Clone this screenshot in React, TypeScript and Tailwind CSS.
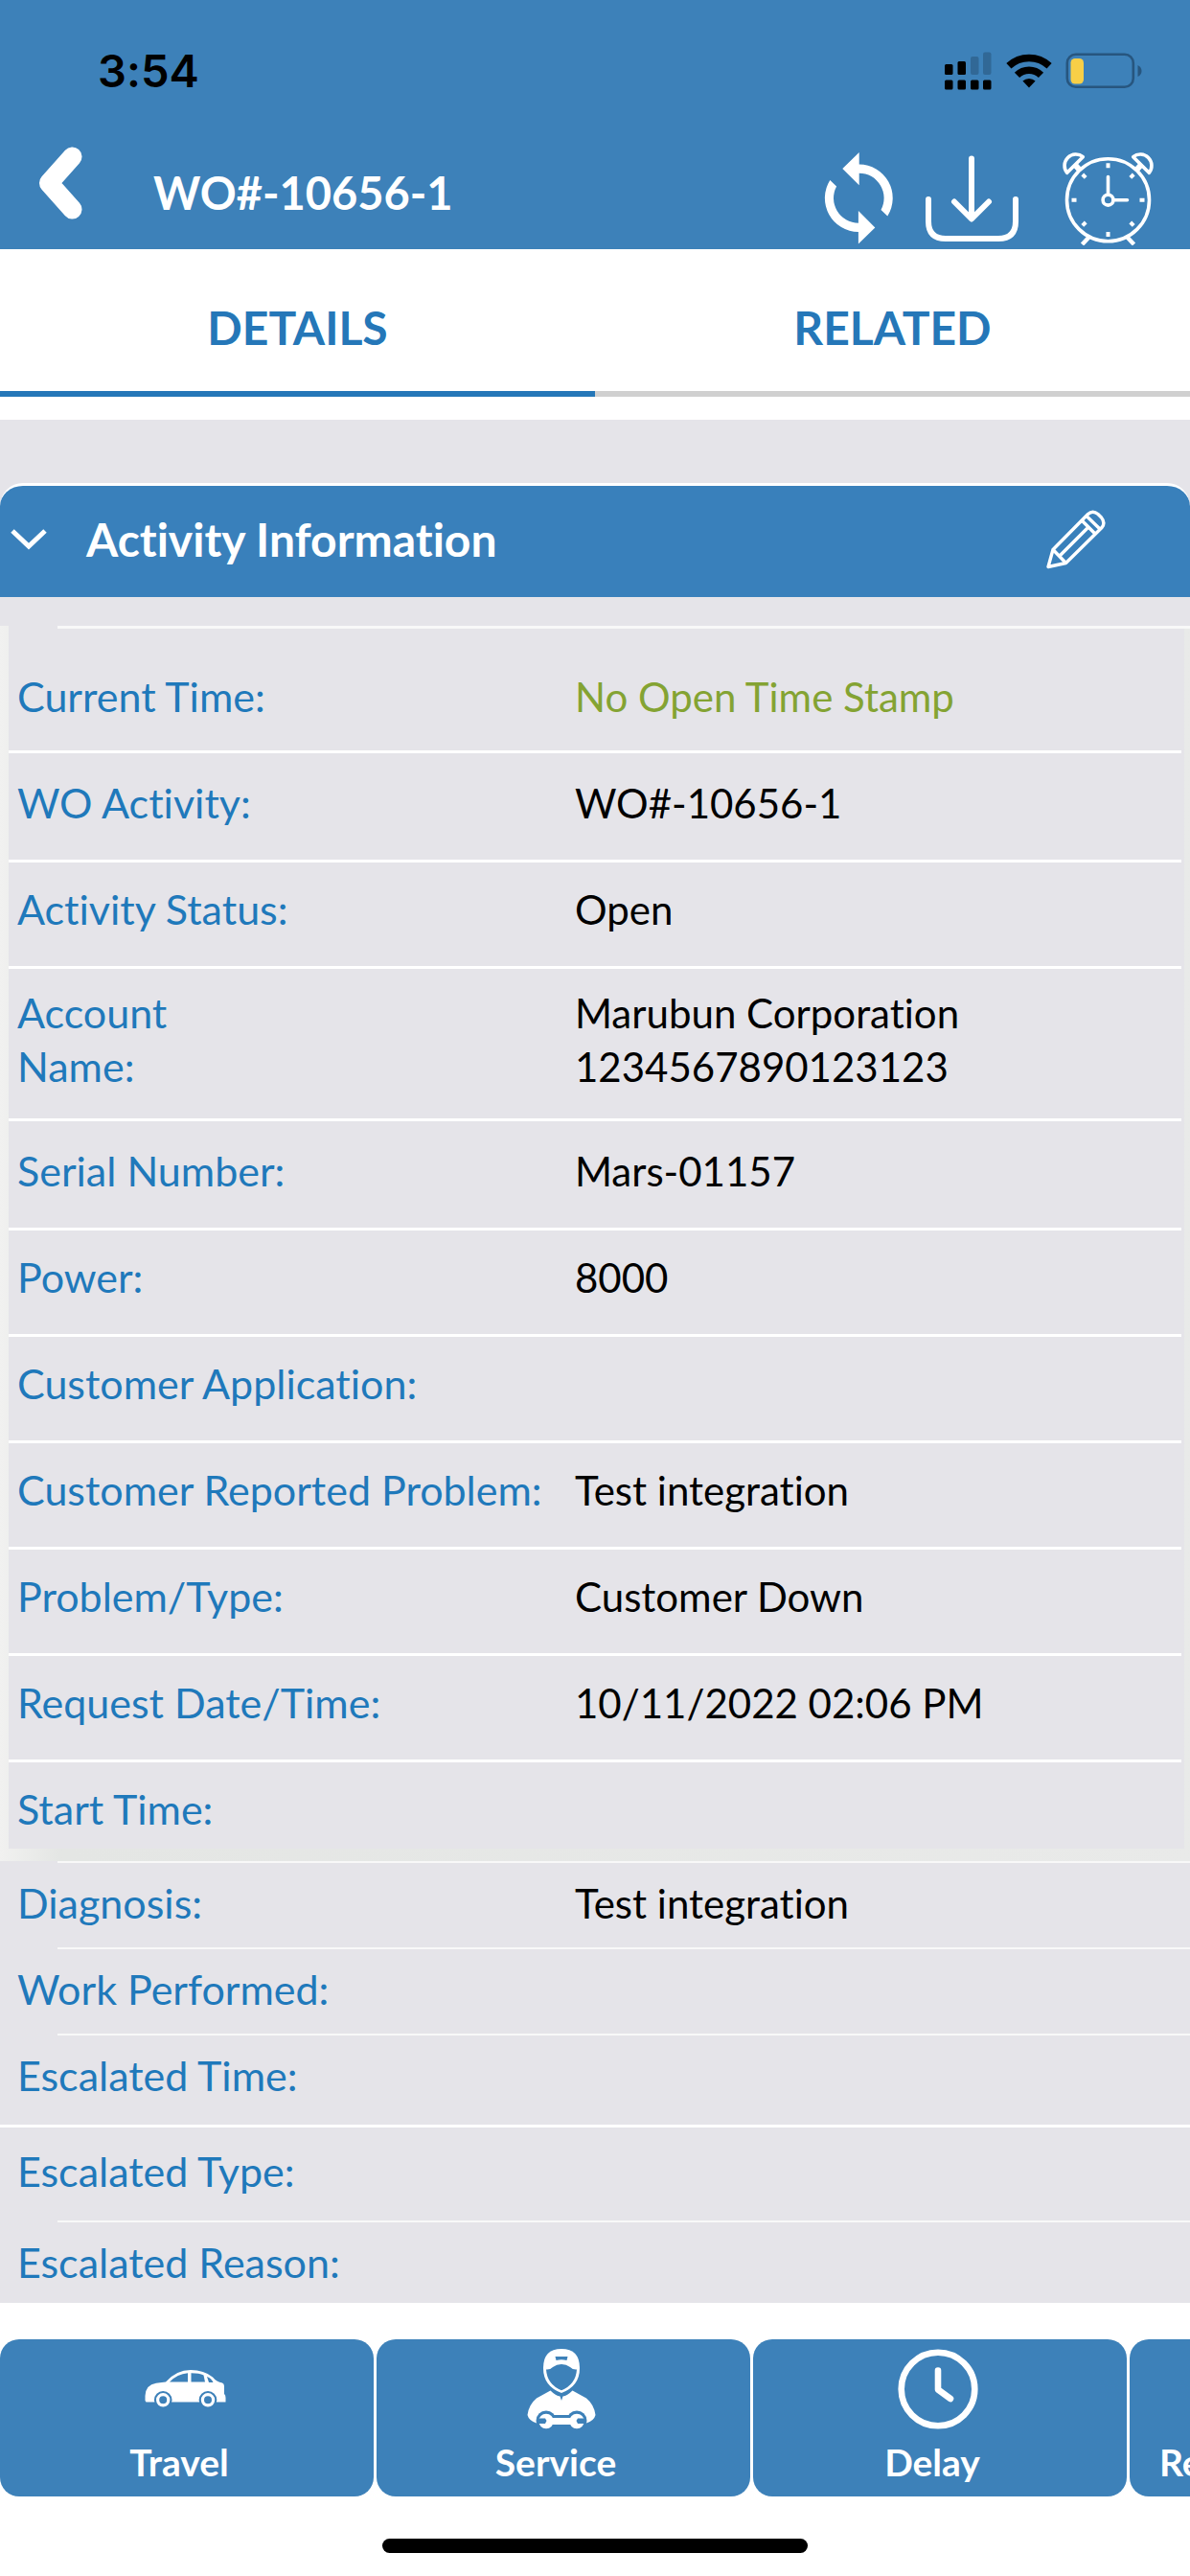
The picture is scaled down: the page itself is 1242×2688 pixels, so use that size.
import type { ReactNode } from 'react';
import { Headset } from 'lucide-react';

interface Field {
  label: string;
  value?: string;
  className: string;
  valueClassName?: string;
}

// Full-width white rule drawn under a row
const RULE = 'after:col-span-2 after:h-[3px] after:bg-white';

const activityFields: Field[] = [
  {
    label: 'Current Time:',
    value: 'No Open Time Stamp',
    className: 'pt-[43px] gap-y-7',
    valueClassName: 'text-[#84a333]',
  },
  {
    label: 'WO Activity:',
    value: 'WO#-10656-1',
    className: 'pt-6 gap-y-[31px]',
  },
  {
    label: 'Activity Status:',
    value: 'Open',
    className: 'pt-[21px] gap-y-[31px]',
  },
  {
    label: 'Account\nName:',
    value: 'Marubun Corporation\n1234567890123123',
    className: 'pt-[18px] gap-y-[26px]',
  },
  {
    label: 'Serial Number:',
    value: 'Mars-01157',
    className: 'pt-6 gap-y-[31px]',
  },
  { label: 'Power:', value: '8000', className: 'pt-[21px] gap-y-[31px]' },
  { label: 'Customer Application:', className: 'pt-[21px] gap-y-[31px]' },
  {
    label: 'Customer Reported Problem:',
    value: 'Test integration',
    className: 'pt-[21px] gap-y-[31px]',
  },
  {
    label: 'Problem/Type:',
    value: 'Customer Down',
    className: 'pt-[21px] gap-y-[31px]',
  },
  {
    label: 'Request Date/Time:',
    value: '10/11/2022 02:06 PM',
    className: 'pt-[21px] gap-y-[31px]',
  },
];

function FieldRow({
  field,
  rule = '',
  className = '',
}: {
  field: Field;
  rule?: string;
  className?: string;
}) {
  return (
    <div
      className={`grid grid-cols-[591px_1fr] leading-14 ${field.className} ${rule} ${className}`}
    >
      <dt className="pl-[9px] text-[43px] whitespace-pre-line text-[#1f79bb]">
        {field.label}
      </dt>
      <dd
        className={`text-[42px] whitespace-pre-line ${field.valueClassName ?? 'text-black'}`}
      >
        {field.value}
      </dd>
    </div>
  );
}

function SignalIcon() {
  return (
    <svg width="51" height="40" viewBox="0 0 51 40">
      <rect x="1" y="13" width="8.5" height="11" rx="1.5" />
      <rect x="14.5" y="10" width="8.5" height="14" rx="1.5" />
      <rect x="28" y="5" width="8.5" height="19" rx="2" fill="#316896" />
      <rect x="41" y="0.5" width="8.5" height="23.5" rx="2" fill="#316896" />
      <rect x="1" y="29.5" width="8.5" height="10" rx="1.5" />
      <rect x="14.5" y="29.5" width="8.5" height="10" rx="1.5" />
      <rect x="28" y="29.5" width="8.5" height="10" rx="1.5" />
      <rect x="41" y="29.5" width="8.5" height="10" rx="1.5" />
    </svg>
  );
}

function WifiIcon() {
  return (
    <svg width="48" height="36" viewBox="0 0 48 36">
      <g fill="none" stroke="#000" strokeWidth="7.5">
        <path d="M2.9 12.8 A31 31 0 0 1 45.1 12.8" />
        <path d="M11.5 22.4 A18 18 0 0 1 36.5 22.4" />
      </g>
      <path d="M17.4 28.6 A9.5 9.5 0 0 1 30.6 28.6 L24 35.5 Z" />
    </svg>
  );
}

function BatteryIcon() {
  return (
    <svg width="80" height="38" viewBox="0 0 80 38">
      <rect
        x="1.8"
        y="1.8"
        width="69"
        height="34"
        rx="9"
        fill="none"
        stroke="#27567f"
        strokeWidth="2.6"
      />
      <rect x="5.5" y="6" width="13.5" height="26.5" rx="4.5" fill="#f8cf47" />
      <path d="M75.5 13 Q79.5 15 79.5 19 T75.5 25 Z" fill="#27567f" />
    </svg>
  );
}

function RefreshIcon() {
  const arrow =
    'M37.7 1 L20.3 18 L37.7 35.3 V22.7 A26 26 0 0 1 60.5 61 L67.3 67.5 A35.3 35.3 0 0 0 37.7 13.4 Z';
  return (
    <svg width="75" height="98" viewBox="0 0 75 98" fill="#fff">
      <path d={arrow} />
      <path d={arrow} transform="rotate(180 37.3 48.7)" />
    </svg>
  );
}

function DownloadIcon() {
  return (
    <svg
      width="98"
      height="98"
      viewBox="0 -4 98 98"
      fill="none"
      stroke="#fff"
      strokeWidth="6"
      strokeLinecap="round"
      strokeLinejoin="round"
    >
      <path d="M3 46 V69 Q3 87 21 87 H76 Q94 87 94 69 V46" />
      <path d="M48 3.5 V66 M30 48.5 L48 66.5 L66 48.5" />
    </svg>
  );
}

function AlarmIcon() {
  return (
    <svg
      width="97"
      height="98"
      viewBox="0 0 97 98"
      fill="none"
      stroke="#fff"
      strokeWidth="3.6"
    >
      <circle cx="48.5" cy="50.7" r="43" />
      <circle cx="48.5" cy="50.7" r="5.4" />
      <path d="M48.5 45.3 V26.5 M54 50.7 H68.5" strokeLinecap="round" />
      <path d="M22.3 5.7 A11.8 11.8 0 0 0 5.7 22.3 Z" strokeLinejoin="round" />
      <path d="M74.7 5.7 A11.8 11.8 0 0 1 91.3 22.3 Z" strokeLinejoin="round" />
      <path d="M14 14 L19 19.5 M83 14 L78 19.5" strokeWidth="6" />
      <path d="M28.5 89.5 L21.5 97 M68.5 89.5 L75.5 97" strokeWidth="4.4" />
      <path
        d="M48.5 12.3 V17.3 M48.5 84 V89 M10.5 50.7 H15.5 M81.5 50.7 H86.5 M21.8 24 L25.2 27.4 M71.8 27.4 L75.2 24 M21.8 77.4 L25.2 74 M71.8 74 L75.2 77.4"
        strokeWidth="4"
      />
    </svg>
  );
}

function PencilIcon() {
  return (
    <svg
      width="62"
      height="62"
      viewBox="0 0 62 62"
      fill="none"
      stroke="#fff"
      strokeWidth="3.4"
      strokeLinejoin="round"
    >
      <path d="M2 59.5 L7 41.5 L43.5 4.5 Q48.5 0 54 4.5 L57.5 8 Q62 13.5 58 18.5 L20.5 55.5 Z" />
      <path d="M7 41.5 L20.5 55.5 M14 48 L43.5 18.5 M37 11 L51.5 25.5 M42 6.5 L56.5 20.5" />
    </svg>
  );
}

function CarIcon() {
  return (
    <svg width="85" height="84" viewBox="0 -22 85 84" fill="#fff">
      <path d="M0.5 32 V27 Q1 15.5 12 13.8 L22 12.5 Q33 0 48 0 Q62 0 71 7.5 Q75 12.5 81 13.5 Q83 14 83 17 V25 Q84.5 26 84.5 29 V33.5 H1.5 Z" />
      <g fill="#3d81b9">
        <path d="M26 12.5 Q34 4 45 3.2 V12.5 Z" />
        <path d="M48.5 3.2 Q57 3.2 61.5 5.5 L63 12.5 H48.5 Z" />
        <path d="M65 7 Q69.5 8.5 71.5 13 H67 Z" />
        <circle cx="19.2" cy="31.3" r="9.3" />
        <circle cx="66" cy="31.3" r="9.3" />
      </g>
      <g fill="none" stroke="#fff" strokeWidth="3.2">
        <circle cx="19.2" cy="31.3" r="5.6" />
        <circle cx="66" cy="31.3" r="5.6" />
      </g>
    </svg>
  );
}

function MechanicIcon() {
  return (
    <svg width="72" height="84" viewBox="0 0 72 84" fill="#fff">
      <path d="M17 20 Q17 0 36 0 Q55 0 55 20 Q55 39 36 46 Q17 39 17 20 Z" />
      <path
        d="M20 21.5 Q24 22 27 19 Q31 16 36 16 Q41 16 45 19 Q48 22 52 21.5 Q51 37 36 43.3 Q21 37 20 21.5 Z"
        fill="#3d81b9"
      />
      <path d="M29.5 8 H42.5 L41.5 12 Q36 10.5 30.5 12 Z" fill="#3d81b9" />
      <path d="M24.5 43.5 Q30 49 34.5 49.5 L36 54 L37.5 49.5 Q42 49 47.5 43.5 L62 51.5 Q70 58 71.5 69 Q70 75 62 77.5 H10 Q2 75 0.5 69 Q2 58 10 51.5 Z" />
      <g fill="#3d81b9">
        <circle cx="20" cy="75" r="10.5" />
        <circle cx="52" cy="75" r="10.5" />
        <rect x="20" y="69" width="32" height="13" />
      </g>
      <circle cx="20" cy="75.5" r="7.8" />
      <circle cx="52" cy="75.5" r="7.8" />
      <rect x="20" y="72" width="32" height="7" />
      <path d="M11 72.5 H19 L20.5 75 L19 78 H11 Z" fill="#3d81b9" />
      <path d="M61 72.5 H53 L51.5 75 L53 78 H61 Z" fill="#3d81b9" />
    </svg>
  );
}

function ClockIcon() {
  return (
    <svg
      width="84"
      height="84"
      viewBox="0 0 84 84"
      fill="none"
      stroke="#fff"
      strokeWidth="6.6"
      strokeLinecap="round"
      strokeLinejoin="round"
    >
      <circle cx="42" cy="42" r="38.3" />
      <path d="M42 22.5 V42.5 L55 52" />
    </svg>
  );
}

function ActionButton({ label, icon }: { label: string; icon: ReactNode }) {
  return (
    <button
      type="button"
      className="flex h-[164px] w-[390px] shrink-0 flex-col items-center rounded-[20px] bg-[#3d81b9] pt-2.5 text-[39px] leading-12 font-bold text-white"
    >
      <span className="pr-1">{icon}</span>
      <span className="pt-2.5 pr-4">{label}</span>
    </button>
  );
}

export default function App() {
  return (
    <div className="flex min-h-screen w-full flex-col overflow-x-hidden bg-white font-['Lato',sans-serif] [font-variant-ligatures:none]">
      <header className="bg-[#3d81b9]">
        <div className="flex h-[148px] items-center justify-between pr-[50px] pl-[102px]">
          <span className="font-['Inter',sans-serif] text-[47px] font-semibold text-black">
            3:54
          </span>
          <div className="flex items-center gap-3.5">
            <SignalIcon />
            <WifiIcon />
            <BatteryIcon />
          </div>
        </div>

        <div className="flex h-28 items-start pt-[5px] pr-[37px] pl-10">
          <button type="button" aria-label="Back">
            <svg width="46" height="76" viewBox="0 0 46 76">
              <path
                d="M35.5 10.5 L11 38 L35.5 65.5"
                fill="none"
                stroke="#fff"
                strokeWidth="20"
                strokeLinecap="round"
                strokeLinejoin="round"
              />
            </svg>
          </button>
          <h1 className="mt-5 ml-[74px] text-[47px] leading-14 font-bold text-white">
            WO#-10656-1
          </h1>
          <div className="mt-[5px] ml-auto flex">
            <button type="button" aria-label="Refresh">
              <RefreshIcon />
            </button>
            <button type="button" aria-label="Download" className="ml-8">
              <DownloadIcon />
            </button>
            <button type="button" aria-label="Time stamp" className="ml-11">
              <AlarmIcon />
            </button>
          </div>
        </div>
      </header>

      <nav
        role="tablist"
        className="flex pb-6 text-[48px] leading-14 font-bold text-[#2577b8]"
      >
        <button
          type="button"
          role="tab"
          aria-selected="true"
          className="flex-1 border-b-6 border-[#2577b8] pt-[54px] pb-[38px]"
        >
          DETAILS
        </button>
        <button
          type="button"
          role="tab"
          aria-selected="false"
          className="flex-1 border-b-6 border-[#d0d0d0] pt-[54px] pb-[38px]"
        >
          RELATED
        </button>
      </nav>

      <main className="bg-[#e5e4e9] pt-[66px]">
        <div className="flex h-[119px] items-center rounded-t-3xl border-t-3 border-white bg-[#3980bb] pr-[88px] pb-1 pl-[11px]">
          <button
            type="button"
            aria-label="Collapse section"
            className="flex w-[79px]"
          >
            <svg width="38" height="24" viewBox="0 0 38 24">
              <path
                d="M2 3 L19 19 L36 3"
                fill="none"
                stroke="#fff"
                strokeWidth="5"
              />
            </svg>
          </button>
          <h2 className="text-[48px] leading-14 font-bold text-white">
            Activity Information
          </h2>
          <button type="button" aria-label="Edit" className="ml-auto">
            <PencilIcon />
          </button>
        </div>

        <div className="mt-[30px] bg-linear-to-r from-[#f1f1f0] via-[#e4e6e4] via-5% to-[#e9eae9] pr-1.5 pb-[13px] pl-[9px]">
          <dl className="bg-[#e5e4e9]">
            <div className="-mr-1.5 ml-[51px] h-[3px] bg-[#f8f8f8]" />
            {activityFields.map((field) => (
              <FieldRow
                key={field.label}
                field={field}
                rule={RULE}
                className="mr-[3px]"
              />
            ))}
            <FieldRow
              field={{ label: 'Start Time:', className: 'pt-[21px] pb-[13px]' }}
            />
          </dl>
        </div>

        <dl>
          <div className="ml-[60px] h-0.5 bg-[#f8f8f8]" />
          <div className="pl-[9px]">
            <FieldRow
              field={{
                label: 'Diagnosis:',
                value: 'Test integration',
                className: 'pt-3.5 pb-[18px]',
              }}
            />
          </div>
          <div className="ml-[60px] h-0.5 bg-[#f8f8f8]" />
          <div className="pl-[9px]">
            <FieldRow
              field={{ label: 'Work Performed:', className: 'pt-3.5 pb-[18px]' }}
            />
          </div>
          <div className="ml-[60px] h-0.5 bg-[#f8f8f8]" />
          <div className="pl-[9px]">
            <FieldRow
              field={{ label: 'Escalated Time:', className: 'pt-3.5 pb-[23px]' }}
            />
          </div>
          <div className="h-[3px] bg-white" />
          <div className="pl-[9px]">
            <FieldRow
              field={{ label: 'Escalated Type:', className: 'pt-[18px] pb-[23px]' }}
            />
          </div>
          <div className="ml-[60px] h-0.5 bg-[#f8f8f8]" />
          <div className="pl-[9px]">
            <FieldRow
              field={{ label: 'Escalated Reason:', className: 'pt-3.5 pb-3.5' }}
            />
          </div>
        </dl>
      </main>

      <footer className="flex flex-col items-center pt-[38px] pb-6">
        <div className="flex w-full gap-[3px] overflow-hidden">
          <ActionButton label="Travel" icon={<CarIcon />} />
          <ActionButton label="Service" icon={<MechanicIcon />} />
          <ActionButton label="Delay" icon={<ClockIcon />} />
          <ActionButton
            label="Remote Diagnosis"
            icon={<Headset size={84} strokeWidth={2} />}
          />
        </div>
        <div className="mt-11 h-[15px] w-[444px] rounded-full bg-black" />
      </footer>
    </div>
  );
}
